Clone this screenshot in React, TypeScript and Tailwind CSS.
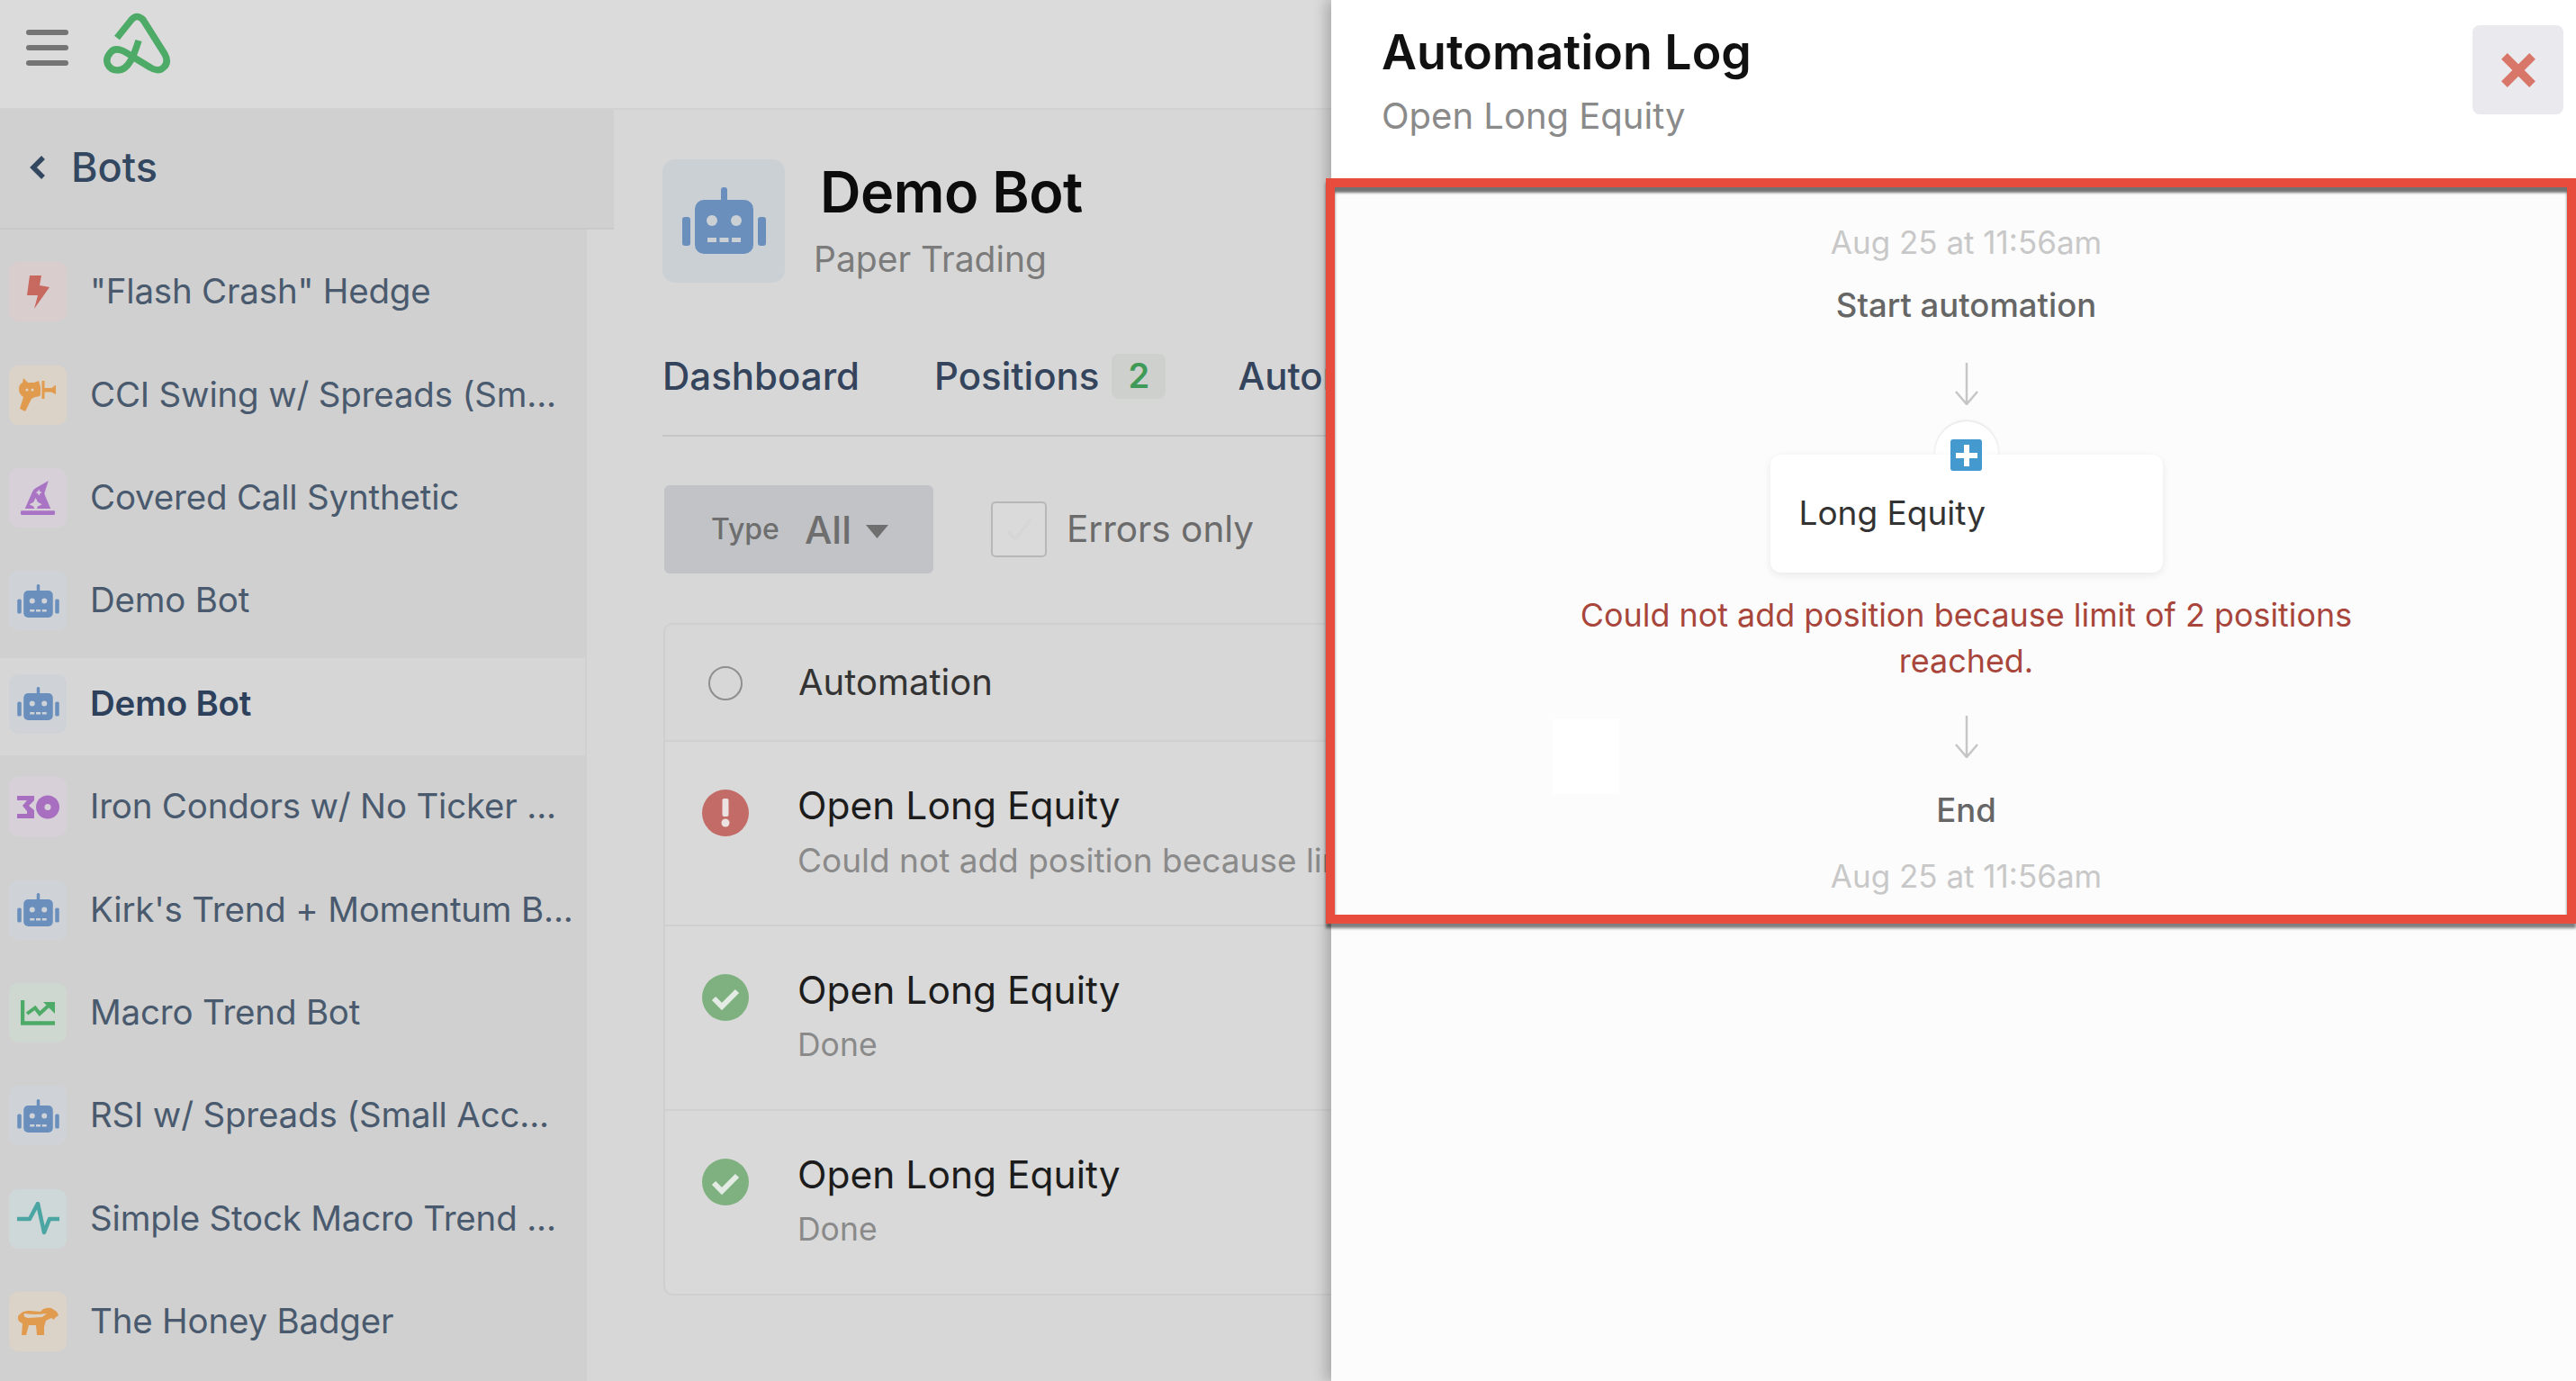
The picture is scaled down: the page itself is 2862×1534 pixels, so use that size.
import React from "react";
import { FaHatWizard } from "react-icons/fa";

const Robot = ({ w, h, bg }: { w: number; h: number; bg: string }) => (
  <svg width={w} height={h} viewBox="0 0 93 74">
    <rect x="43" y="0" width="7" height="18" rx="3" fill="#6a8fbd" />
    <rect x="0" y="33" width="9" height="32" rx="3" fill="#6a8fbd" />
    <rect x="84" y="33" width="9" height="32" rx="3" fill="#6a8fbd" />
    <rect x="14" y="14" width="65" height="60" rx="10" fill="#6a8fbd" />
    <circle cx="33" cy="37" r="6" fill={bg} />
    <circle cx="60" cy="37" r="6" fill={bg} />
    <rect x="28" y="56" width="10" height="5" fill={bg} />
    <rect x="41.5" y="56" width="10" height="5" fill={bg} />
    <rect x="55" y="56" width="10" height="5" fill={bg} />
  </svg>
);

const Bolt = () => (
  <svg width="25" height="37" viewBox="0 0 25 37">
    <polygon points="3,0 16,0 14,11 25,13 8,37 12,22 0,22" fill="#c8695f" />
  </svg>
);

const RayGun = () => (
  <svg width="42" height="37" viewBox="0 0 42 37">
    <path d="M5 0 L10 5 L17 5 L22 3 L24 10 L24 19 Q22 21 18 21 L14 23 L7 37 L1 34 L5 21 Q0 18 0 12 Q0 7 4 5 Z" fill="#e19b4e" />
    <rect x="25.5" y="3" width="3" height="20" fill="#e19b4e" />
    <rect x="28" y="11" width="8" height="4.5" fill="#e19b4e" />
    <polygon points="35,12 41,7.5 41,18 35,15" fill="#e19b4e" />
    <circle cx="9" cy="13" r="1.6" fill="#dcd3c8" />
    <circle cx="15" cy="13" r="1.6" fill="#dcd3c8" />
  </svg>
);

const Condor = () => (
  <svg width="47" height="27" viewBox="0 0 47 27">
    <path d="M0 1 H19 V6 L13 12 L19 17 V26 H0 V21 H11 V18 L6 12 L11 6 H0 Z" fill="#a86fc0" />
    <circle cx="34" cy="13.5" r="13" fill="#a86fc0" />
    <circle cx="34" cy="13.5" r="3.5" fill="#d7d0d9" />
  </svg>
);

const Chart = () => (
  <svg width="38" height="28" viewBox="0 0 38 28" fill="none">
    <path d="M2 0 V25.5 H38" stroke="#4dab67" strokeWidth="4.5" />
    <path d="M7 15 L16 8.5 L21 15 L31 6" stroke="#4dab67" strokeWidth="4" />
    <polygon points="25,2 38,2 38,15" fill="#4dab67" />
  </svg>
);

const Pulse = () => (
  <svg width="47" height="37" viewBox="0 0 47 37" fill="none">
    <path d="M0 19 H14 L23 2 L30 34 L36 19 H47" stroke="#4aa5a3" strokeWidth="4.5" strokeLinejoin="round" />
  </svg>
);

const Badger = () => (
  <svg width="47" height="32" viewBox="0 0 47 32">
    <path
      fillRule="evenodd"
      fill="#e19b4e"
      d="M1 10 Q6 3 14 4 L26 5 Q30 0 38 1 L44 5 L46 9 L42 12 L41 14 L38 12 L32 15 L30 22 L30 31 L22 31 L21 20 L13 20 L10 31 L5 31 L6 18 Q0 16 1 10 Z M8 7 Q6 11 12 12 L28 11 L33 7 Q20 9 8 7 Z"
    />
  </svg>
);

const Logo = () => (
  <svg width="80" height="72" viewBox="115 12 80 72" fill="none">
    <path
      d="M131 41 L147 21 Q153 14 160 21 L184 59 Q190 70 180 76 Q174 78 168 74 L150 63 C140 56 130 50 124 57 C115 67 122 77 132 77 C144 77 150 60 155 44"
      stroke="#4daa67"
      strokeWidth="7.5"
      strokeLinejoin="round"
    />
  </svg>
);

const items: { name: string; bg: string; icon: React.ReactNode; sel?: boolean }[] = [
  { name: '"Flash Crash" Hedge', bg: "bg-[#d9cdcd]", icon: <Bolt /> },
  { name: "CCI Swing w/ Spreads (Sm...", bg: "bg-[#dcd3c8]", icon: <RayGun /> },
  { name: "Covered Call Synthetic", bg: "bg-[#d7d0d9]", icon: <FaHatWizard size={38} color="#a974c4" /> },
  { name: "Demo Bot", bg: "bg-[#cfd3d8]", icon: <Robot w={47} h={37} bg="#cfd3d8" /> },
  { name: "Demo Bot", bg: "bg-[#cfd3d8]", icon: <Robot w={47} h={37} bg="#cfd3d8" />, sel: true },
  { name: "Iron Condors w/ No Ticker ...", bg: "bg-[#d7d0d9]", icon: <Condor /> },
  { name: "Kirk's Trend + Momentum B...", bg: "bg-[#cfd3d8]", icon: <Robot w={47} h={37} bg="#cfd3d8" /> },
  { name: "Macro Trend Bot", bg: "bg-[#cfd8d0]", icon: <Chart /> },
  { name: "RSI w/ Spreads (Small Acc...", bg: "bg-[#cfd3d8]", icon: <Robot w={47} h={37} bg="#cfd3d8" /> },
  { name: "Simple Stock Macro Trend ...", bg: "bg-[#ced8d9]", icon: <Pulse /> },
  { name: "The Honey Badger", bg: "bg-[#dcd3c8]", icon: <Badger /> },
];

const Arrow = () => (
  <svg width="30" height="47" viewBox="0 0 30 47" fill="none">
    <path d="M15 0 V46 M3 32 L15 46 L27 32" stroke="#c6c6c6" strokeWidth="2.5" />
  </svg>
);

const Status = ({ ok }: { ok: boolean }) => (
  <svg width="52" height="52" viewBox="0 0 52 52" className="shrink-0 mt-[12px]">
    <circle cx="26" cy="26" r="26" fill={ok ? "#7fb180" : "#c36b66"} />
    {ok ? (
      <path d="M13 27 L22 36 L39 19" stroke="#e4ebe4" strokeWidth="6" fill="none" />
    ) : (
      <>
        <rect x="22.5" y="10" width="7" height="20" rx="2" fill="#ece2e1" />
        <circle cx="26" cy="37" r="4.5" fill="#ece2e1" />
      </>
    )}
  </svg>
);

const rows = [
  { ok: false, sub: "Could not add position because limit of 2 positions reached." },
  { ok: true, sub: "Done" },
  { ok: true, sub: "Done" },
];

export default function App() {
  return (
    <div
      className="relative w-[2862px] h-[1534px] overflow-hidden flex flex-col bg-[#d7d7d7]"
      style={{ fontFamily: "Inter, 'Liberation Sans', sans-serif" }}
    >
      <header className="h-[122px] shrink-0 bg-[#dbdbdb] border-b-2 border-[#d2d2d2] flex items-center pl-[29px] pb-[18px]">
        <div className="w-[47px] flex flex-col gap-[11px] mt-[4px]">
          <div className="h-[6px] rounded-full bg-[#757575]" />
          <div className="h-[6px] rounded-full bg-[#757575]" />
          <div className="h-[6px] rounded-full bg-[#757575]" />
        </div>
        <div className="ml-[38px] mt-[-4px]">
          <Logo />
        </div>
      </header>

      <div className="flex flex-1 min-h-0">
        <aside className="w-[682px] shrink-0 flex flex-col">
          <div className="h-[133px] shrink-0 bg-[#d0d0d0] border-b-2 border-[#c9c9c9] flex items-center pl-[32px] pb-[4px]">
            <svg width="20" height="28" viewBox="0 0 20 28" fill="none">
              <path d="M16 3 L5 14 L16 25" stroke="#334760" strokeWidth="5.5" />
            </svg>
            <span className="ml-[27px] text-[45px] font-medium text-[#334760] leading-none">Bots</span>
          </div>
          <div className="w-[652px] flex-1 bg-[#d0d0d0] pt-[12px]">
            {items.map((it, i) => (
              <div
                key={i}
                className={
                  "h-[114.4px] flex items-center pl-[10px] " +
                  (it.sel ? "bg-[#d6d6d6] bg-clip-padding border-t-[6px] border-[#d0d0d0] pb-[6px] w-[650px]" : "")
                }
              >
                <div className={"w-[64px] h-[66px] rounded-[10px] flex items-center justify-center shrink-0 " + it.bg}>
                  <div className="flex items-center justify-center w-[47px]">{it.icon}</div>
                </div>
                <span
                  className={
                    "ml-[26px] text-[38.5px] tracking-[-0.2px] whitespace-nowrap " +
                    (it.sel ? "font-semibold text-[#2d415c]" : "text-[#4a5a6e]")
                  }
                >
                  {it.name}
                </span>
              </div>
            ))}
          </div>
        </aside>

        <main className="flex-1 pl-[54px] pt-[55px]">
          <div className="flex">
            <div className="w-[136px] h-[137px] rounded-[14px] bg-[#cbd0d5] flex items-center justify-center pb-[2px]">
              <Robot w={93} h={74} bg="#cbd0d5" />
            </div>
            <div className="ml-[39px]">
              <div className="text-[63px] font-semibold text-[#0c0c0c] leading-[72px] tracking-[-0.5px]">Demo Bot</div>
              <div className="text-[39px] text-[#7b7b7b] leading-[56px] ml-[-7px] mt-[11px]">Paper Trading</div>
            </div>
          </div>

          <div className="w-[1000px] mt-[72px] pb-[36px] border-b-2 border-[#c6c6c6] flex items-center h-[97px] text-[42px] font-medium text-[#33445c]">
            <span className="leading-[60px]">Dashboard</span>
            <span className="ml-[83px] leading-[60px]">Positions</span>
            <span className="ml-[14px] w-[60px] h-[50px] rounded-[8px] bg-[#cdd0cd] text-[#3f9a58] font-semibold text-[38px] flex items-center justify-center">2</span>
            <span className="ml-[80px] leading-[60px]">Automations</span>
          </div>

          <div className="mt-[54px] flex items-center ml-[2px]">
            <div className="w-[299px] h-[98px] rounded-[6px] bg-[#c1c3c7] flex items-center pl-[52px]">
              <span className="text-[32px] text-[#6e6e6e] font-medium">Type</span>
              <span className="ml-[28px] text-[43px] text-[#6e6e6e] font-medium">All</span>
              <svg width="25" height="15" viewBox="0 0 25 15" className="ml-[16px] mt-[4px]">
                <polygon points="0,0 25,0 12.5,15" fill="#6f6f6f" />
              </svg>
            </div>
            <div className="ml-[64px] w-[62px] h-[62px] rounded-[5px] border-2 border-[#b7b7b7] bg-[#dadada] flex items-center justify-center">
              <svg width="36" height="32" viewBox="0 0 36 32" fill="none">
                <path d="M6 18 L14 27 L31 5" stroke="#d6d6d6" strokeWidth="4" />
              </svg>
            </div>
            <span className="ml-[22px] text-[40.5px] text-[#6b6b6b]">Errors only</span>
          </div>

          <div className="mt-[55px] ml-[1px] w-[900px] rounded-[10px] border-2 border-[#cfcfcf] text-[#222]">
            <div className="h-[128px] flex items-center pl-[48px] bg-[#d7d7d7] rounded-t-[10px]">
              <div className="w-[38px] h-[38px] rounded-full border-2 border-[#8f8f8f] shrink-0 mr-[62px] mt-[2px]" />
              <span className="text-[40px] text-[#333]">Automation</span>
            </div>
            {rows.map((r, i) => (
              <div key={i} className="h-[205px] border-t-2 border-[#d0d0d0] bg-[#d9d9d9] flex items-start pl-[41px] pt-[41px] last:rounded-b-[10px]">
                <Status ok={r.ok} />
                <div className="ml-[54px] whitespace-nowrap">
                  <div className="text-[42.5px] text-[#1c1c1c] leading-[60px]">Open Long Equity</div>
                  <div className={"text-[#8a8a8a] leading-[62px] " + (r.ok ? "text-[35.5px]" : "text-[37px]")}>{r.sub}</div>
                </div>
              </div>
            ))}
          </div>
        </main>
      </div>

      {/* Drawer over the page */}
      <div className="absolute right-0 top-0 bottom-0 w-[1383px] bg-[#fcfcfc] shadow-[-6px_0_14px_rgba(0,0,0,0.22)] flex flex-col">
        <div className="h-[198px] shrink-0 bg-white flex items-start pl-[56px] relative">
          <div>
            <div className="text-[53.7px] font-semibold text-[#111] leading-[64px] mt-[26px]">Automation Log</div>
            <div className="text-[40px] text-[#8a8a8a] leading-[52px] mt-[13px]">Open Long Equity</div>
          </div>
          <div className="absolute top-[28px] right-[14px] w-[101px] h-[99px] rounded-[8px] bg-[#eaeaee] flex items-center justify-center">
            <svg width="40" height="40" viewBox="0 0 36 36" fill="none">
              <path d="M4 4 L32 32 M32 4 L4 32" stroke="#d8766a" strokeWidth="8.5" />
            </svg>
          </div>
        </div>

        {/* Red annotation frame around the log */}
        <section className="relative h-[828px] ml-[-6px] border-[10px] border-[#e84c3d] shadow-[0_5px_3px_rgba(0,0,0,0.5),inset_0_6px_3px_rgba(0,0,0,0.55)] bg-[#fcfcfc] pl-[34px] flex flex-col items-center">
          <div className="mt-[37px] text-[35px] leading-[48px] text-[#c8c8c8]">Aug 25 at 11:56am</div>
          <div className="mt-[22px] text-[36.5px] leading-[48px] font-medium text-[#666]">Start automation</div>
          <div className="mt-[40px] h-[47px]">
            <Arrow />
          </div>
          <div className="mt-[18px] relative w-[436px] h-[168px] flex flex-col items-center">
            <div className="w-[70px] h-[70px] rounded-full bg-white shadow-[0_-1px_3px_rgba(0,0,0,0.12)]" />
            <div className="absolute bottom-0 left-0 w-[436px] h-[131px] rounded-[12px] bg-white shadow-[0_3px_10px_rgba(0,0,0,0.08)] pl-[32px] pt-[40px] text-[37px] leading-[50px] text-[#333]">
              Long Equity
            </div>
            <div className="absolute top-[20px] w-[35px] h-[35px] rounded-[3px] bg-[#4499cf] flex items-center justify-center">
              <svg width="24" height="24" viewBox="0 0 24 24">
                <path d="M9 0 H15 V9 H24 V15 H15 V24 H9 V15 H0 V9 H9 Z" fill="#fff" />
              </svg>
            </div>
          </div>
          <div className="mt-[22px] w-[900px] text-center text-[35.9px] leading-[51px] text-[#a8463c]">
            Could not add position because limit of 2 positions reached.
          </div>
          <div className="mt-[35px] h-[47px]">
            <Arrow />
          </div>
          <div className="mt-[34px] text-[36.5px] leading-[48px] font-medium text-[#666]">End</div>
          <div className="mt-[25px] text-[35px] leading-[48px] text-[#c8c8c8]">Aug 25 at 11:56am</div>
          <div className="absolute left-[242px] top-[591px] w-[74px] h-[83px] bg-white" />
        </section>
      </div>
    </div>
  );
}
